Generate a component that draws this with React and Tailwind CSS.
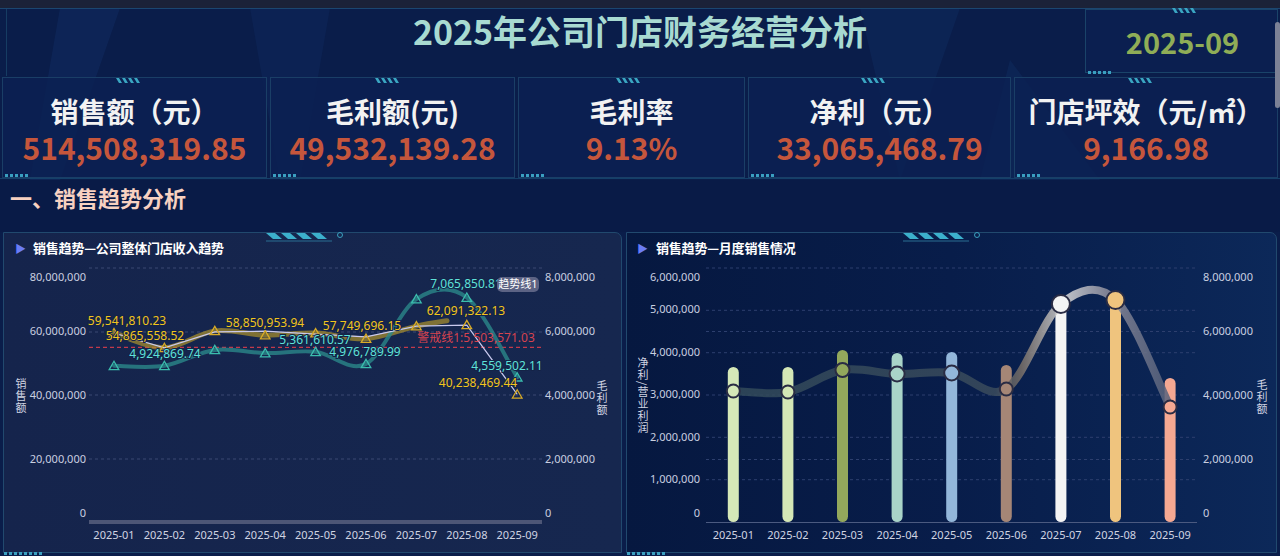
import React from "react";

const months = ["2025-01", "2025-02", "2025-03", "2025-04", "2025-05", "2025-06", "2025-07", "2025-08", "2025-09"];

const kpis = [
  { label: "销售额（元）", value: "514,508,319.85" },
  { label: "毛利额(元)", value: "49,532,139.28" },
  { label: "毛利率", value: "9.13%" },
  { label: "净利（元）", value: "33,065,468.79" },
  { label: "门店坪效（元/㎡）", value: "9,166.98" },
];

// catmull-rom -> bezier
function smoothPath(pts, k = 1 / 6) {
  let d = `M${pts[0][0]},${pts[0][1]}`;
  for (let i = 0; i < pts.length - 1; i++) {
    const p0 = pts[i - 1] || pts[i];
    const p1 = pts[i];
    const p2 = pts[i + 1];
    const p3 = pts[i + 2] || p2;
    const c1x = p1[0] + (p2[0] - p0[0]) * k;
    const c1y = p1[1] + (p2[1] - p0[1]) * k;
    const c2x = p2[0] - (p3[0] - p1[0]) * k;
    const c2y = p2[1] - (p3[1] - p1[1]) * k;
    d += ` C${c1x},${c1y} ${c2x},${c2y} ${p2[0]},${p2[1]}`;
  }
  return d;
}

const Stripes = ({ className }) => (
  <svg className={className} width="26" height="5" viewBox="0 0 26 5">
    {[0, 6, 12, 18].map((x) => (
      <path key={x} d={`M${x} 0h3l3 5h-3z`} fill="#3aa6c2" />
    ))}
  </svg>
);

const Dots = ({ className, n = 6 }) => (
  <div className={`flex gap-[2px] ${className}`}>
    {Array.from({ length: n }).map((_, i) => (
      <span key={i} className="w-[3px] h-[3px] bg-[#3a9fc0]" />
    ))}
  </div>
);

const PanelDeco = ({ left }) => (
  <svg className="absolute -top-[1px]" style={{ left }} width="90" height="10" viewBox="0 0 90 10">
    {[0, 15, 30, 45].map((x) => (
      <path key={x} d={`M${x} 1h9l7 6h-9z`} fill="#3cb0cc" />
    ))}
    <path d="M-4 9H66" stroke="#2a6f92" strokeWidth="1" />
    <circle cx="74" cy="3" r="2.5" fill="none" stroke="#3aa0bf" strokeWidth="1" />
  </svg>
);

// vertical axis name
const AxisName = ({ className, children }) => (
  <div
    className={`absolute [writing-mode:vertical-rl] text-[11px] leading-[12px] tracking-[1px] text-[#d0d4e2] font-['Noto_Sans_CJK_SC',sans-serif] ${className}`}
  >
    {children}
  </div>
);

function TrendChart() {
  const X = (i) => 110 + 50.4 * i;
  const YL = (v) => 259 - v * 3.175;
  const YR = (v) => 259 - v * 31.75;
  const sales = [59.54, 54.87, 60.2, 58.85, 59.5, 57.75, 61.7, 62.09, 40.24];
  const profit = [4.92, 4.92, 5.42, 5.32, 5.36, 4.98, 7.02, 7.07, 4.56];
  const lav = [59.54, 54.87, 59.9, 60.1, 59.2, 58.3, 61.7, 62.0, 40.24];
  const salesPts = sales.map((v, i) => [X(i), YL(v)]);
  const profitPts = profit.map((v, i) => [X(i), YR(v)]);
  const yellowTrend = [...salesPts.slice(0, 7), [443, YL(63.4)]];
  const leftTicks = [
    ["80,000,000", 14],
    ["60,000,000", 68],
    ["40,000,000", 132],
    ["20,000,000", 196],
    ["0", 250],
  ];
  const rightTicks = [
    ["8,000,000", 14],
    ["6,000,000", 68],
    ["4,000,000", 132],
    ["2,000,000", 196],
    ["0", 250],
  ];
  const yLabels = [
    ["59,541,810.23", 123, 58],
    ["54,865,558.52", 141, 73],
    ["58,850,953.94", 261, 60],
    ["57,749,696.15", 358, 63],
    ["62,091,322.13", 462, 48],
    ["40,238,469.44", 474, 120],
  ];
  const tLabels = [
    ["4,924,869.74", 161, 91],
    ["5,361,610.57", 311, 77],
    ["4,976,789.99", 361, 89],
    ["7,065,850.81", 462, 21],
    ["4,559,502.11", 503, 103],
  ];
  const tri = (x, y) => `M${x},${y - 4.5} L${x + 4.8},${y + 3.8} L${x - 4.8},${y + 3.8} Z`;

  return (
    <svg width="617" height="289" className="block font-['Noto_Sans','Noto_Sans_CJK_SC',sans-serif]">
      {[5, 69, 132, 196].map((y) => (
        <line key={y} x1="85" x2="538" y1={y} y2={y} stroke="#3a4873" strokeDasharray="3 3" />
      ))}
      <rect x="85" y="257" width="453" height="4" fill="#4d5676" />
      {leftTicks.map(([t, y]) => (
        <text key={t} x="82" y={y} dy="0.35em" textAnchor="end" fontSize="11" fill="#c9cfe0">
          {t}
        </text>
      ))}
      {rightTicks.map(([t, y]) => (
        <text key={t} x="541" y={y} dy="0.35em" fontSize="11" fill="#c9cfe0">
          {t}
        </text>
      ))}
      {months.map((m, i) => (
        <text key={m} x={X(i)} y="272" dy="0.35em" textAnchor="middle" fontSize="11" fill="#d0d4e2">
          {m}
        </text>
      ))}

      {/* warning line */}
      <line x1="85" x2="538" y1={YR(5.5)} y2={YR(5.5)} stroke="#c23a4b" strokeWidth="1.2" strokeDasharray="4 3" />

      {/* trend curves */}
      <path d={smoothPath(yellowTrend)} fill="none" stroke="#ad922b" strokeOpacity="0.7" strokeWidth="5" strokeLinecap="round" />
      <path d={smoothPath(profitPts)} fill="none" stroke="#2b8789" strokeOpacity="0.8" strokeWidth="4" strokeLinecap="round" />
      <polyline points={lav.map((v, i) => `${X(i)},${YL(v)}`).join(" ")} fill="none" stroke="#c9c9ee" strokeWidth="1.2" />

      {salesPts.map(([x, y], i) => (
        <path key={"s" + i} d={tri(x, y)} fill="none" stroke="#d8ab27" strokeWidth="1.3" />
      ))}
      {profitPts.map(([x, y], i) => (
        <path key={"p" + i} d={tri(x, y)} fill="none" stroke="#3bbcad" strokeWidth="1.3" />
      ))}

      {yLabels.map(([t, x, y]) => (
        <text key={t} x={x} y={y} dy="0.35em" textAnchor="middle" fontSize="12" fill="#f2c51d" stroke="#142347" strokeWidth="2" paintOrder="stroke">
          {t}
        </text>
      ))}
      {tLabels.map(([t, x, y]) => (
        <text key={t} x={x} y={y} dy="0.35em" textAnchor="middle" fontSize="12" fill="#5fe2da" stroke="#142347" strokeWidth="2" paintOrder="stroke">
          {t}
        </text>
      ))}
      <text x="472" y="75" dy="0.35em" textAnchor="middle" fontSize="12" fill="#d6434f">
        警戒线1:5,503,571.03
      </text>
      <rect x="493" y="14" width="42" height="15" rx="5" fill="#5c6384" />
      <text x="514" y="21.5" dy="0.35em" textAnchor="middle" fontSize="11" fill="#ffffff">
        趋势线1
      </text>
    </svg>
  );
}

function MonthlyChart() {
  const X = (i) => 106.3 + 54.6 * i;
  const colors = ["#d5e8b8", "#d4e7b6", "#93a85c", "#a9d4c8", "#93b7da", "#a58676", "#f4f4f4", "#efc47e", "#f5a892"];
  const barTop = [104, 104, 87, 90, 89, 102, 37, 33, 115];
  const dotY = [128, 129, 107, 111, 110, 126, 41, 37, 144];
  const dotR = [6.5, 6.5, 7, 7.5, 7.5, 6.5, 9, 9, 6.5];
  const pts = dotY.map((y, i) => [X(i), y]);
  const leftTicks = [
    ["6,000,000", 14],
    ["5,000,000", 46],
    ["4,000,000", 89],
    ["3,000,000", 131],
    ["2,000,000", 174],
    ["1,000,000", 216],
    ["0", 250],
  ];
  const rightTicks = [
    ["8,000,000", 14],
    ["6,000,000", 68],
    ["4,000,000", 132],
    ["2,000,000", 196],
    ["0", 250],
  ];

  return (
    <svg width="649" height="289" className="block font-['Noto_Sans','Noto_Sans_CJK_SC',sans-serif]">
      <defs>
        <linearGradient id="lineGrad" gradientUnits="userSpaceOnUse" x1={X(0)} x2={X(8)} y1="0" y2="0">
          <stop offset="0" stopColor="#324a5a" />
          <stop offset="0.6" stopColor="#3a4b5c" />
          <stop offset="0.66" stopColor="#7a7068" />
          <stop offset="0.76" stopColor="#dcdcdc" />
          <stop offset="0.86" stopColor="#8d8d9c" />
          <stop offset="1" stopColor="#56607a" />
        </linearGradient>
      </defs>
      {[5, 47.3, 68.5, 89.7, 132, 174.3, 196.5, 216.7].map((y) => (
        <line key={y} x1="79" x2="570" y1={y} y2={y} stroke="#2d3f6e" strokeDasharray="3 3" />
      ))}
      <line x1="79" x2="570" y1="259.5" y2="259.5" stroke="#4b5a80" />
      {leftTicks.map(([t, y]) => (
        <text key={t} x="73" y={y} dy="0.35em" textAnchor="end" fontSize="11" fill="#c9cfe0">
          {t}
        </text>
      ))}
      {rightTicks.map(([t, y]) => (
        <text key={t} x="576" y={y} dy="0.35em" fontSize="11" fill="#c9cfe0">
          {t}
        </text>
      ))}
      {months.map((m, i) => (
        <text key={m} x={X(i)} y="272" dy="0.35em" textAnchor="middle" fontSize="11" fill="#d0d4e2">
          {m}
        </text>
      ))}

      {barTop.map((t, i) => (
        <rect key={"b" + i} x={X(i) - 5.5} y={t} width="11" height={259 - t} rx="5.5" fill={colors[i]} />
      ))}
      <path d={smoothPath(pts)} fill="none" stroke="url(#lineGrad)" strokeOpacity="0.85" strokeWidth="8" strokeLinecap="round" />
      {pts.map(([x, y], i) => (
        <circle key={"c" + i} cx={x} cy={y} r={dotR[i]} fill={colors[i]} stroke="#2a2c44" strokeWidth="2" />
      ))}
    </svg>
  );
}

export default function App() {
  return (
    <div className="relative w-[1280px] h-[556px] overflow-hidden bg-[#0a1d4a] font-['Noto_Sans_CJK_SC','Noto_Sans',sans-serif]">
      {/* faint background facets */}
      <svg className="absolute inset-0 pointer-events-none" width="1280" height="556">
        <polygon points="60,8 120,8 60,180 30,180" fill="#15346e" opacity="0.35" />
        <polygon points="250,8 330,8 300,180 280,180" fill="#15346e" opacity="0.25" />
        <polygon points="860,8 960,8 900,180" fill="#15346e" opacity="0.3" />
        <polygon points="1010,60 1100,180 980,180" fill="#15346e" opacity="0.3" />
        <polygon points="0,180 1280,180 1280,232 0,232" fill="#081a44" opacity="0.4" />
      </svg>

      <div className="relative h-[8px] bg-[#1b2238]" />

      <header className="relative grid grid-cols-[195px_1fr_195px] h-[68px] border-t border-[#1b4670]">
        <div className="border-l border-[#163c63] ml-[6px]" />
        <h1 className="text-center text-[34px] font-bold leading-[40px] pt-[2px] text-[#a8dad1]">
          2025年公司门店财务经营分析
        </h1>
        <div className="relative mb-[3px] mr-[2px] border border-[#1a4369] bg-[#0c2255]/60 flex items-center justify-center">
          <span className="text-[29px] font-bold leading-none text-[#8fad57] pl-[2px]">2025-09</span>
          <Stripes className="absolute -top-[2px] left-[86px]" />
          <Dots className="absolute -bottom-[2px] left-[2px]" n={5} />
        </div>
      </header>

      <section className="relative grid grid-cols-[265px_245px_227px_263px_264px] gap-[3px] pl-[2px] h-[102px] pt-[1px]">
        {kpis.map((k) => (
          <div
            key={k.label}
            className="relative flex flex-col items-center overflow-hidden border border-[#1a3e66] bg-[#0b2153]/80 pt-[16px]"
          >
            <div className="text-[28px] font-bold leading-[34px] text-[#f2f2f2] whitespace-nowrap">{k.label}</div>
            <div className="text-[30px] font-bold leading-[38px] text-[#c5563c] whitespace-nowrap">{k.value}</div>
            <Stripes className="absolute top-0 left-[43%]" />
            <Dots className="absolute bottom-0 left-[2px]" n={5} />
          </div>
        ))}
      </section>

      <div className="relative h-[54px] pl-[10px] pt-[3px] border-t border-[#14406a]">
        <h2 className="text-[22px] font-bold leading-[30px] text-[#f7d1c1]">一、销售趋势分析</h2>
      </div>

      <main className="relative flex gap-[4px] pl-[3px] h-[321px]">
        <div className="relative w-[619px] border border-[#21496e] rounded-tr-[7px] bg-gradient-to-r from-[#15244c] to-[#16274f]">
          <div className="h-[30px] flex items-center pl-[11px]">
            <span className="text-[#6b7df5] text-[11px] leading-none mr-[7px]">▶</span>
            <span className="text-[13px] font-bold text-white tracking-[-0.2px]">销售趋势—公司整体门店收入趋势</span>
          </div>
          <TrendChart />
          <AxisName className="left-[11px] top-[145px]">销售额</AxisName>
          <AxisName className="left-[592px] top-[147px]">毛利额</AxisName>
          <PanelDeco left="262px" />
          <Dots className="absolute -bottom-[3px] left-0" n={8} />
        </div>

        <div className="relative w-[651px] border border-[#21496e] rounded-tr-[7px] bg-gradient-to-r from-[#061840] via-[#081d4a] to-[#0c2859]">
          <div className="h-[30px] flex items-center pl-[10px]">
            <span className="text-[#6b7df5] text-[11px] leading-none mr-[8px]">▶</span>
            <span className="text-[13px] font-bold text-white tracking-[-0.2px]">销售趋势—月度销售情况</span>
          </div>
          <MonthlyChart />
          <AxisName className="left-[10px] top-[124px]">净利/营业利润</AxisName>
          <AxisName className="left-[629px] top-[146px]">毛利额</AxisName>
          <PanelDeco left="276px" />
          <Dots className="absolute -bottom-[3px] left-0" n={8} />
        </div>
      </main>

      <div className="absolute right-0 top-[22px] w-[5px] h-[86px] rounded-full bg-[#7c8196]" />
    </div>
  );
}
